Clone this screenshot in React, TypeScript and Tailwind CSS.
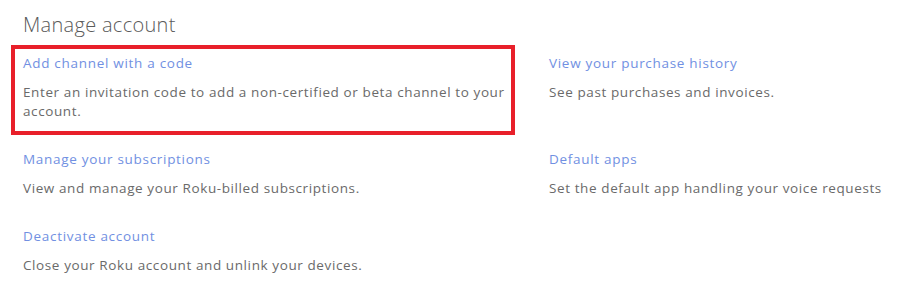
import React from 'react';

type Item = {
  title: string;
  desc: string;
  highlight?: boolean;
};

const items: Item[] = [
  {
    title: 'Add channel with a code',
    desc: 'Enter an invitation code to add a non-certified or beta channel to your account.',
    highlight: true,
  },
  { title: 'View your purchase history', desc: 'See past purchases and invoices.' },
  { title: 'Manage your subscriptions', desc: 'View and manage your Roku-billed subscriptions.' },
  { title: 'Default apps', desc: 'Set the default app handling your voice requests' },
  { title: 'Deactivate account', desc: 'Close your Roku account and unlink your devices.' },
];

function AccountItem({ item }: { item: Item }) {
  return (
    <div
      className={
        item.highlight
          ? 'border-4 border-[#e8202a] pl-2 pr-1 pt-[5px] pb-[10px]'
          : 'border-4 border-transparent pl-2 pr-1 pt-[5px] pb-[10px]'
      }
    >
      <a href="#" className="block text-[13.5px] leading-[19px] text-[#7190e2] tracking-[0.7px]">
        {item.title}
      </a>
      <p className="mt-[10px] text-[13.5px] leading-[19px] text-[#6a6a6a] tracking-[0.6px]">{item.desc}</p>
    </div>
  );
}

export default function App() {
  return (
    <div className="min-h-screen bg-white pl-[11px] pt-[11px] font-['Open_Sans',sans-serif]">
      <h2 className="pl-3 text-[20px] leading-[28px] text-[#5a5a5a] font-light tracking-[0.3px]">Manage account</h2>
      <div className="mt-[6px] grid grid-cols-[504px_1fr] gap-x-[22px] gap-y-[6px]">
        {items.map((item) => (
          <AccountItem key={item.title} item={item} />
        ))}
      </div>
    </div>
  );
}
